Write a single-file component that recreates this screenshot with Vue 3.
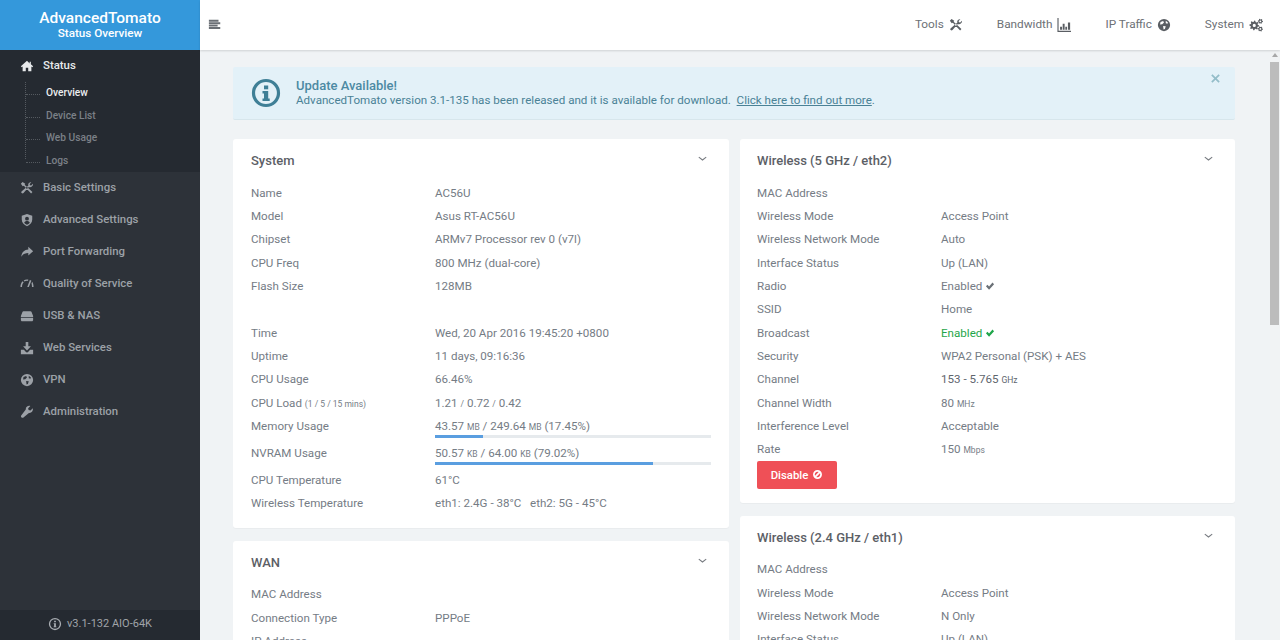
<script setup>
function gear(cx, cy, r, hole, teeth) {
  const pts = []
  const n = teeth * 4
  for (let i = 0; i < n; i++) {
    const a = (i / n) * Math.PI * 2
    const rad = i % 4 < 2 ? r : r * 0.74
    pts.push((cx + Math.cos(a) * rad).toFixed(2) + ' ' + (cy + Math.sin(a) * rad).toFixed(2))
  }
  return 'M' + pts.join('L') + 'Z' +
    `M${cx - hole} ${cy}a${hole} ${hole} 0 1 0 ${hole * 2} 0a${hole} ${hole} 0 1 0 ${-hole * 2} 0Z`
}
const icons = {
  home: 'M8 2 1 8.400 2 9.500 3 8.700V14h3.600v-4h2.800v4H13V8.700l1 .8 1-1.100-2.600-2.400V3H11v2L8 2Z',
  tools: 'M2.900 1 6 3.200 5.300 4.400l8.900 8.300-1.500 1.500-8.300-8.800-1.300.7L1 3.100ZM14.800 3.200l-2 2-1.400-.4-.4-1.400 2-2c-1.700-.5-3.600.7-3.600 2.600 0 .4 0 .7.2 1L2 11.700c-.7.7-.7 1.500-.1 2.100.6.6 1.400.6 2.100-.1L9.700 7c2.300.8 5.700-1 5.100-3.800Z',
  shield: 'M8 1 2 3v4.500C2 11 4.600 13.800 8 15c3.400-1.200 6-4 6-7.500V3ZM8 4.300a2.200 2.200 0 1 1 0 4.400 2.200 2.200 0 0 1 0-4.400ZM4.800 11c.4-1.300 1.700-1.900 3.200-1.900s2.800.6 3.200 1.900c-.8 1-2 1.800-3.200 2.300-1.200-.5-2.400-1.300-3.200-2.300Z',
  share: 'M9.500 2 15 7l-5.500 5V9C6 9 3.300 10 1.500 13.500 1.800 8.500 4.700 5.200 9.500 5Z',
  gauge: 'M8 2.800c-1.400 0-2.700.4-3.800 1.100l.9 1.300C6 4.700 7 4.400 8 4.400c.4 0 .7 0 1 .1l.6-1.500C9.100 2.900 8.600 2.800 8 2.800ZM3 4.800C1.500 6.300.5 8.600.5 11.500h1.800c0-2.300.7-4.100 1.900-5.400ZM11.300 3.400 8.300 11.500h1.800l2.900-7.100c-.5-.4-1.100-.8-1.700-1ZM13.900 5.500l-.7 1.800c.3 1.200.5 2.600.5 4.200h1.800c0-2.400-.6-4.500-1.600-6Z',
  hdd: 'M4 2.500h8c.6 0 1 .3 1.200.8L15 8v4.500c0 .8-.6 1.400-1.400 1.400H2.400c-.8 0-1.400-.6-1.400-1.400V8l1.800-4.700C3 2.800 3.400 2.500 4 2.500ZM1 9.300v1h14v-1Z',
  download: 'M6.500 1h3v5H12.500L8 10.800 3.500 6h3ZM1 10h3.500L6.500 12.300c.9 1 2.100 1 3 0L11.500 10H15v5H1Z',
  globe: 'M8 1a7 7 0 1 0 0 14A7 7 0 0 0 8 1ZM4 4.500 7 3.500 8 5 6 7 3.500 7.500ZM10 3 12.500 5 12 6.500 10 6ZM7 9 10 9.500 9 12.500 7.500 13Z',
  wrench: 'M14.600 3.800 12 6.300l-2.200-.5-.5-2.200 2.500-2.500C9.700.3 6.300 1.900 6.600 5L1.600 11.600c-.7.9-.6 2 .2 2.700.8.6 1.800.5 2.500-.3L10.200 9c2.900.5 5.100-2.300 4.400-5.200Z',
  gears: gear(6, 8.5, 5.6, 1.8, 8) + gear(13, 3.800, 3, 1, 6) + gear(13, 12.500, 3, 1, 6),
  chart: 'M.5 0h1.300v14.500H16V16H.5ZM3.500 10h2.200v3.500H3.500Zm3-3.500h2.200v7H6.500Zm3 3.500h2v3.500h-2ZM12.500 5H15v8.500h-2.500Z',
  bars: 'M1 2h11v2.200H1Zm0 2.800h13V7H1Zm0 2.800h10v2.200H1Zm0 2.800h13v2.200H1Z',
  info: 'M8 1a7 7 0 1 0 0 14A7 7 0 0 0 8 1Zm0 1.500a5.500 5.500 0 1 1 0 11 5.500 5.500 0 0 1 0-11ZM7 4.200h2v1.800H7ZM6.500 7h2.500v3.800h.6v1H6.400v-1H7V8h-.5Z',
  ban: 'M8 1.500a6.500 6.500 0 1 0 0 13 6.500 6.500 0 0 0 0-13Zm0 2.500c.6 0 1.200.1 1.700.4L4.400 9.700A4 4 0 0 1 8 4Zm0 8c-.6 0-1.200-.1-1.700-.4l5.300-5.300A4 4 0 0 1 8 12Z',
  check: 'M1.500 8.500 4 6l2.500 2.800L12 2.500 14.500 5 6.500 14Z',
  chevron: 'M2 5 8 9.500 14 5l1.200 1.300L8 12 .8 6.300Z',
  close: 'M3.600 1.800 8 6.200l4.400-4.400 1.800 1.800L9.800 8l4.400 4.400-1.800 1.800L8 9.800l-4.400 4.400-1.800-1.800L6.200 8 1.800 3.600Z'
}
const rule = (name) => (name === 'gears' || name === 'globe' ? 'evenodd' : 'nonzero')
const menu = [
  ['tools', 'Basic Settings'], ['shield', 'Advanced Settings'], ['share', 'Port Forwarding'],
  ['gauge', 'Quality of Service'], ['hdd', 'USB & NAS'], ['download', 'Web Services'],
  ['globe', 'VPN'], ['wrench', 'Administration']
]
const subs = ['Overview', 'Device List', 'Web Usage', 'Logs']
const top = [
  ['Tools', 'tools'], ['Bandwidth', 'chart'], ['IP Traffic', 'globe'], ['System', 'gears']
]
</script>

<template>
  <div class="shell">
    <aside class="side">
      <div class="brand">
        <div class="brand-name">AdvancedTomato</div>
        <div class="brand-sub">Status Overview</div>
      </div>
      <div class="active">
        <div class="item cur">
          <svg class="mi" viewBox="0 0 16 16"><path :d="icons.home" /></svg>
          <span>Status</span>
        </div>
        <ul class="subs">
          <li v-for="(s, i) in subs" :key="s" :class="{ on: i === 0 }">{{ s }}</li>
        </ul>
      </div>
      <nav class="menu">
        <div v-for="m in menu" :key="m[1]" class="item">
          <svg class="mi" viewBox="0 0 16 16"><path :d="icons[m[0]]" :fill-rule="rule(m[0])" /></svg>
          <span>{{ m[1] }}</span>
        </div>
      </nav>
      <div class="foot">
        <svg class="fi" viewBox="0 0 16 16"><path :d="icons.info" /></svg>
        <span>v3.1-132 AIO-64K</span>
      </div>
    </aside>
    <div class="col">
      <header class="head">
        <svg class="burger" viewBox="0 0 16 16"><path :d="icons.bars" /></svg>
        <div class="tops">
          <div v-for="t in top" :key="t[0]" class="top">
            <span>{{ t[0] }}</span>
            <svg class="ti" viewBox="0 0 16 16"><path :d="icons[t[1]]" :fill-rule="rule(t[1])" /></svg>
          </div>
        </div>
      </header>
      <main class="main">
        <section class="alert">
          <svg class="alert-i" viewBox="0 0 30 30">
            <circle cx="15" cy="15" r="12.500" fill="none" stroke="#3f7f96" stroke-width="3.200" />
            <rect x="13" y="7.500" width="4.200" height="3.800" fill="#3f7f96" />
            <path d="M11.500 13h5.700v7.500h1.500v2.500h-7.200v-2.500H13v-5h-1.500Z" fill="#3f7f96" />
          </svg>
          <div class="alert-t">
            <div class="alert-h">Update Available!</div>
            <div>AdvancedTomato version 3.1-135 has been released and it is available for download. &nbsp;<a>Click here to find out more</a>.</div>
          </div>
          <svg class="alert-x" viewBox="0 0 16 16"><path :d="icons.close" /></svg>
        </section>
        <div class="cols">
          <div class="stack first">
            <section class="card">
              <div class="card-h">System<svg class="chev" viewBox="0 0 16 16"><path :d="icons.chevron" /></svg></div>
              <div class="rows">
                <div class="row"><span>Name</span><span>AC56U</span></div>
                <div class="row"><span>Model</span><span>Asus RT-AC56U</span></div>
                <div class="row"><span>Chipset</span><span>ARMv7 Processor rev 0 (v7l)</span></div>
                <div class="row"><span>CPU Freq</span><span>800 MHz (dual-core)</span></div>
                <div class="row"><span>Flash Size</span><span>128MB</span></div>
                <div class="row"><span>&nbsp;</span><span></span></div>
                <div class="row"><span>Time</span><span>Wed, 20 Apr 2016 19:45:20 +0800</span></div>
                <div class="row"><span>Uptime</span><span>11 days, 09:16:36</span></div>
                <div class="row"><span>CPU Usage</span><span>66.46%</span></div>
                <div class="row"><span>CPU Load <small>(1 / 5 / 15 mins)</small></span><span>1.21 <small>/</small> 0.72 <small>/</small> 0.42</span></div>
                <div class="row tall"><span>Memory Usage</span><span class="val">43.57 <small>MB</small> / 249.64 <small>MB</small> (17.45%)<i class="bar"><b class="mem" /></i></span></div>
                <div class="row tall"><span>NVRAM Usage</span><span class="val">50.57 <small>KB</small> / 64.00 <small>KB</small> (79.02%)<i class="bar"><b class="nv" /></i></span></div>
                <div class="row"><span>CPU Temperature</span><span>61°C</span></div>
                <div class="row"><span>Wireless Temperature</span><span>eth1: 2.4G - 38°C &nbsp; eth2: 5G - 45°C</span></div>
              </div>
            </section>
            <section class="card">
              <div class="card-h">WAN<svg class="chev" viewBox="0 0 16 16"><path :d="icons.chevron" /></svg></div>
              <div class="rows">
                <div class="row"><span>MAC Address</span><span></span></div>
                <div class="row"><span>Connection Type</span><span>PPPoE</span></div>
                <div class="row"><span>IP Address</span><span></span></div>
                <div class="row"><span>Netmask</span><span></span></div>
              </div>
            </section>
          </div>
          <div class="stack second">
            <section class="card">
              <div class="card-h">Wireless (5 GHz / eth2)<svg class="chev" viewBox="0 0 16 16"><path :d="icons.chevron" /></svg></div>
              <div class="rows">
                <div class="row"><span>MAC Address</span><span></span></div>
                <div class="row"><span>Wireless Mode</span><span>Access Point</span></div>
                <div class="row"><span>Wireless Network Mode</span><span>Auto</span></div>
                <div class="row"><span>Interface Status</span><span>Up (LAN)</span></div>
                <div class="row"><span>Radio</span><span>Enabled <svg class="ck" viewBox="0 0 16 16"><path :d="icons.check" /></svg></span></div>
                <div class="row"><span>SSID</span><span>Home</span></div>
                <div class="row"><span>Broadcast</span><span class="ok">Enabled <svg class="ck" viewBox="0 0 16 16"><path :d="icons.check" /></svg></span></div>
                <div class="row"><span>Security</span><span>WPA2 Personal (PSK) + AES</span></div>
                <div class="row"><span>Channel</span><span class="dark">153 - 5.765 <small>GHz</small></span></div>
                <div class="row"><span>Channel Width</span><span>80 <small>MHz</small></span></div>
                <div class="row"><span>Interference Level</span><span>Acceptable</span></div>
                <div class="row"><span>Rate</span><span>150 <small>Mbps</small></span></div>
              </div>
              <button class="btn">Disable <svg class="bi" viewBox="0 0 16 16"><path :d="icons.ban" /></svg></button>
            </section>
            <section class="card">
              <div class="card-h">Wireless (2.4 GHz / eth1)<svg class="chev" viewBox="0 0 16 16"><path :d="icons.chevron" /></svg></div>
              <div class="rows">
                <div class="row"><span>MAC Address</span><span></span></div>
                <div class="row"><span>Wireless Mode</span><span>Access Point</span></div>
                <div class="row"><span>Wireless Network Mode</span><span>N Only</span></div>
                <div class="row"><span>Interface Status</span><span>Up (LAN)</span></div>
              </div>
            </section>
          </div>
        </div>
      </main>
      <div class="sb"><div class="sb-up" /><div class="sb-th" /></div>
    </div>
  </div>
</template>

<style>
html, body { margin: 0; height: 100%; overflow: hidden; }
</style>

<style scoped>
.shell { display: flex; width: 1280px; height: 640px; overflow: hidden; font: 400 11.600px/23.330px Roboto, sans-serif; color: #757c85; background: #f0f3f5; }
.side { width: 200px; flex: none; background: #2d3239; display: flex; flex-direction: column; color: #9ca1a7; font-weight: 500; font-size: 11.400px; }
.brand { height: 50px; background: #3498db; color: #fff; text-align: center; box-sizing: border-box; padding-top: 10px; }
.brand-name { font-size: 15.500px; line-height: 17px; font-weight: 500; }
.brand-sub { font-size: 11.700px; line-height: 13px; font-weight: 500; }
.active { background: #252a31; height: 122px; }
.item { display: flex; align-items: center; height: 32px; padding-left: 20px; gap: 9px; }
.cur { color: #e8eaec; }
.mi { width: 14px; height: 14px; fill: currentColor; flex: none; }
.subs { list-style: none; margin: 0 0 0 25px; padding: 0 0 0 20px; font-size: 10.200px; line-height: 22.700px; position: relative; color: #7b8087; border-left: 1px dotted #555a60; height: 77px; box-sizing: border-box; }
.subs li { position: relative; }
.subs li::before { content: ''; position: absolute; left: -20px; top: 12px; width: 14px; border-top: 1px dotted #555a60; }
.subs .on { color: #eceef0; }
.menu { flex: 1; }
.foot { height: 30px; box-sizing: border-box; padding: 0 0 2px 0; background: #252a31; display: flex; align-items: center; justify-content: center; gap: 5px; font-weight: 400; font-size: 11px; color: #a0a4a9; }
.fi { width: 14px; height: 14px; fill: #a9adb2; }
.col { flex: 1; position: relative; display: flex; flex-direction: column; min-width: 0; }
.head { height: 50px; flex: none; background: #fff; display: flex; align-items: center; padding: 0 17px 0 8px; box-shadow: 0 1px 2px rgba(0, 0, 0, .14); position: relative; z-index: 1; }
.burger { width: 14px; height: 14px; fill: #6a6f75; }
.tops { margin-left: auto; display: flex; gap: 34px; color: #6d7176; font-size: 11.800px; }
.top { display: flex; align-items: center; gap: 5px; }
.ti { width: 14px; height: 14px; fill: #5a5e63; }
.main { flex: 1; min-height: 0; overflow: hidden; padding: 17px 45px 0 33px; }
.alert { position: relative; height: 53px; background: #e3f1f8; border-bottom: 1px solid #d7e6ec; box-sizing: border-box; display: flex; align-items: center; padding: 0 0 0 18px; gap: 15px; color: #4a8296; line-height: 14px; border-radius: 2px; font-size: 11.600px; }
.alert-i { width: 30px; height: 30px; flex: none; }
.alert-h { font-size: 13px; font-weight: 500; color: #4c8aa3; line-height: 14px; }
.alert-t a { text-decoration: underline; }
.alert-x { position: absolute; right: 14px; top: 6px; width: 11px; height: 11px; fill: #93bdc9; }
.cols { display: grid; grid-template-columns: 496px 495px; gap: 11px; margin-top: 19px; }
.stack { display: flex; flex-direction: column; gap: 13px; }
.first { gap: 12.400px; }
.card { background: #fff; border-radius: 3px; padding: 0 18px 13px 18px; box-shadow: 0 1px 1px rgba(0, 0, 0, .03); }
.second .card { padding-left: 17px; padding-bottom: 14px; }
.card-h { height: 42.670px; line-height: 43px; font-size: 13px; font-weight: 500; color: #5c6066; position: relative; }
.chev { position: absolute; right: 4px; top: 15px; width: 9px; height: 9px; fill: #777b80; }
.row { display: flex; height: 23.330px; white-space: nowrap; }
.row > span:first-child { width: 184px; flex: none; }
.row small { font-size: 8.500px; }
.tall { height: 26.800px; }
.val { flex: 1; position: relative; display: block; }
.bar { position: absolute; left: 0; right: 0; top: 20px; height: 3px; background: #e6eaed; display: block; }
.bar b { display: block; height: 3px; background: #5a9ee0; }
.mem { width: 17.450%; }
.nv { width: 79.020%; }
.ok { color: #1fa64a; }
.dark { color: #5e656d; }
.ck { width: 10px; height: 10px; fill: #6a7076; vertical-align: -1px; }
.ok .ck { fill: #1fa64a; }
.btn { display: flex; align-items: center; justify-content: center; gap: 4px; width: 80px; height: 28px; margin-top: -1px; border: 0; border-radius: 2px; background: #ef5057; color: #fff; font: 500 11.400px Roboto, sans-serif; padding: 0; }
.bi { width: 11px; height: 11px; fill: #fff; }
.sb { position: absolute; right: 0; top: 50px; bottom: 0; width: 10px; background: #f1f3f4; }
.sb-up { position: absolute; left: 2px; top: 3px; border: 3px solid transparent; border-top: 0; border-bottom: 4px solid #a8a8a8; }
.sb-th { position: absolute; left: 0; right: 1px; top: 12px; height: 263px; background: #bcbcbc; }
</style>
